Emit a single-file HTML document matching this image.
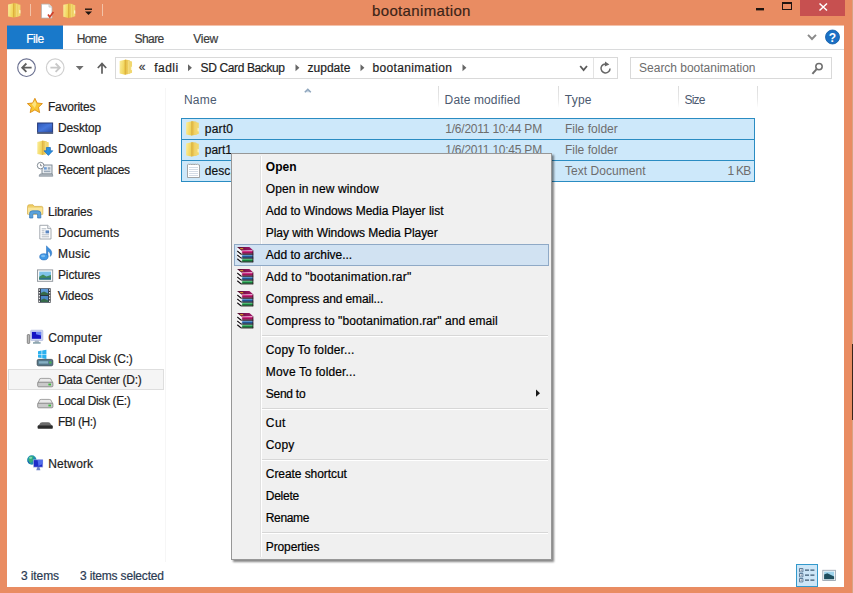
<!DOCTYPE html>
<html>
<head>
<meta charset="utf-8">
<title>bootanimation</title>
<style>
html,body{margin:0;padding:0;}
body{width:853px;height:593px;overflow:hidden;background:#e98c62;font-family:"Liberation Sans",sans-serif;font-size:12px;color:#1a1a1a;position:relative;}
.abs{position:absolute;}
.t{position:absolute;white-space:nowrap;line-height:16px;height:16px;-webkit-text-stroke:0.2px currentColor;}
#title{left:372px;top:1px;font-size:15px;line-height:20px;height:20px;color:#3b2418;letter-spacing:0.35px;}
#client{left:7px;top:26px;width:837px;height:561px;background:#fff;}
#filetab{left:7px;top:26px;width:56px;height:23px;background:#1979ca;}
#ribline{left:7px;top:49px;width:837px;height:1px;background:#dadbdc;}
.box{position:absolute;border:1px solid #d9d9d9;background:#fff;box-sizing:border-box;}
.colsep{position:absolute;top:86px;width:1px;height:22px;background:linear-gradient(#dcdcdc,#e8e8e8 60%,#fff);}
.row{position:absolute;left:181px;width:574px;height:22px;box-sizing:border-box;border:1px solid #2a8cc2;background:#cde8fa;}
#menu{left:231px;top:153px;width:321px;height:407px;background:#f0f0f0;border:1px solid #979797;box-sizing:border-box;box-shadow:2px 2px 2px rgba(0,0,0,0.48);}
#gutter{left:260px;top:156px;width:1px;height:401px;background:#e0e0e0;border-right:1px solid #fff;}
.msep{position:absolute;left:262px;width:286px;height:1px;background:#d7d7d7;border-bottom:1px solid #fff;}
#hl{left:234px;top:244px;width:315px;height:22px;box-sizing:border-box;border:1px solid #8fa9c6;background:#d1e2f2;}
</style>
</head>
<body>
<div id="title" class="t">bootanimation</div>
<div class="abs" style="left:852px;top:0;width:1px;height:593px;background:#d9a382;"></div>
<div class="abs" style="left:852px;top:344px;width:1px;height:76px;background:#3a2418;"></div>
<div class="abs" style="left:800px;top:0;width:44.5px;height:16px;background:#c75050;"></div>
<div id="client" class="abs"></div>
<div class="abs" style="left:7px;top:25px;width:837px;height:1px;background:#f3c2ab;"></div>
<div class="abs" style="left:7px;top:25px;width:56px;height:1px;background:#8b8292;"></div>
<div id="filetab" class="abs"></div>
<div id="ribline" class="abs"></div>
<div class="box" style="left:115px;top:57px;width:503px;height:22px;"></div>
<div class="abs" style="left:593px;top:58px;width:1px;height:20px;background:#e3e3e3;"></div>
<div class="box" style="left:630px;top:57px;width:202px;height:22px;"></div>
<div class="abs" style="left:165px;top:88px;width:1px;height:474px;background:#f6f6f6;"></div>
<div class="abs" style="left:8px;top:369px;width:156px;height:21px;box-sizing:border-box;border:1px solid #dedede;background:#f5f5f5;"></div>
<div class="colsep" style="left:438px;"></div>
<div class="colsep" style="left:558px;"></div>
<div class="colsep" style="left:678px;"></div>
<div class="colsep" style="left:757px;"></div>
<div class="row" style="top:118px;"></div>
<div class="row" style="top:139px;"></div>
<div class="row" style="top:160px;"></div>
<div class="abs" style="left:796px;top:564px;width:22px;height:23px;box-sizing:border-box;border:1px solid #3399cc;background:#cde6f7;"></div>
<div class="t" style="left:26.2px;top:31px;letter-spacing:-0.41px;color:#fff;">File</div>
<div class="t" style="left:76.8px;top:31px;letter-spacing:-0.64px;color:#3c3c3c;">Home</div>
<div class="t" style="left:134.6px;top:31px;letter-spacing:-0.58px;color:#3c3c3c;">Share</div>
<div class="t" style="left:193.3px;top:31px;letter-spacing:-0.30px;color:#3c3c3c;">View</div>
<div class="t" style="left:138.7px;top:59px;letter-spacing:0.60px;color:#3c3c3c;">«</div>
<div class="t" style="left:154.2px;top:60px;letter-spacing:0.47px;color:#1e1e1e;">fadli</div>
<div class="t" style="left:200.6px;top:60px;letter-spacing:-0.38px;color:#1e1e1e;">SD Card Backup</div>
<div class="t" style="left:307.5px;top:60px;letter-spacing:0.02px;color:#1e1e1e;">zupdate</div>
<div class="t" style="left:372.6px;top:60px;letter-spacing:0.33px;color:#1e1e1e;">bootanimation</div>
<div class="t" style="left:639.1px;top:60px;letter-spacing:-0.02px;color:#6d6d6d;-webkit-text-stroke:0;">Search bootanimation</div>
<div class="t" style="left:47.9px;top:99px;letter-spacing:-0.23px;color:#1e1e1e;">Favorites</div>
<div class="t" style="left:58.0px;top:120px;letter-spacing:-0.14px;color:#1e1e1e;">Desktop</div>
<div class="t" style="left:58.0px;top:141px;letter-spacing:-0.02px;color:#1e1e1e;">Downloads</div>
<div class="t" style="left:58.0px;top:162px;letter-spacing:-0.33px;color:#1e1e1e;">Recent places</div>
<div class="t" style="left:48.0px;top:204px;letter-spacing:-0.20px;color:#1e1e1e;">Libraries</div>
<div class="t" style="left:58.0px;top:225px;letter-spacing:0.07px;color:#1e1e1e;">Documents</div>
<div class="t" style="left:58.0px;top:246px;letter-spacing:0.19px;color:#1e1e1e;">Music</div>
<div class="t" style="left:58.0px;top:267px;letter-spacing:-0.14px;color:#1e1e1e;">Pictures</div>
<div class="t" style="left:57.7px;top:288px;letter-spacing:-0.18px;color:#1e1e1e;">Videos</div>
<div class="t" style="left:48.2px;top:330px;letter-spacing:0.16px;color:#1e1e1e;">Computer</div>
<div class="t" style="left:57.9px;top:351px;letter-spacing:-0.27px;color:#1e1e1e;">Local Disk (C:)</div>
<div class="t" style="left:57.9px;top:372px;letter-spacing:-0.28px;color:#1e1e1e;">Data Center (D:)</div>
<div class="t" style="left:57.9px;top:393px;letter-spacing:-0.37px;color:#1e1e1e;">Local Disk (E:)</div>
<div class="t" style="left:57.9px;top:414px;letter-spacing:-0.47px;color:#1e1e1e;">FBI (H:)</div>
<div class="t" style="left:48.2px;top:456px;letter-spacing:0.15px;color:#1e1e1e;">Network</div>
<div class="t" style="left:183.9px;top:92px;letter-spacing:0.26px;color:#4c5a70;-webkit-text-stroke:0;">Name</div>
<div class="t" style="left:444.6px;top:92px;letter-spacing:0.13px;color:#4c5a70;-webkit-text-stroke:0;">Date modified</div>
<div class="t" style="left:564.8px;top:92px;letter-spacing:0.23px;color:#4c5a70;-webkit-text-stroke:0;">Type</div>
<div class="t" style="left:684.5px;top:92px;letter-spacing:-0.80px;color:#4c5a70;-webkit-text-stroke:0;">Size</div>
<div class="t" style="left:204.8px;top:121px;letter-spacing:0.21px;color:#111;">part0</div>
<div class="t" style="left:204.8px;top:142px;letter-spacing:-0.04px;color:#111;">part1</div>
<div class="t" style="left:204.8px;top:163px;letter-spacing:0.05px;color:#111;">desc.txt</div>
<div class="t" style="left:445.3px;top:121px;letter-spacing:-0.23px;color:#6d6d6d;-webkit-text-stroke:0;">1/6/2011 10:44 PM</div>
<div class="t" style="left:445.3px;top:142px;letter-spacing:-0.23px;color:#6d6d6d;-webkit-text-stroke:0;">1/6/2011 10:45 PM</div>
<div class="t" style="left:445.3px;top:163px;letter-spacing:-0.23px;color:#6d6d6d;-webkit-text-stroke:0;">1/6/2011 10:45 PM</div>
<div class="t" style="left:564.9px;top:121px;letter-spacing:0.02px;color:#6d6d6d;-webkit-text-stroke:0;">File folder</div>
<div class="t" style="left:564.9px;top:142px;letter-spacing:0.02px;color:#6d6d6d;-webkit-text-stroke:0;">File folder</div>
<div class="t" style="left:564.9px;top:163px;letter-spacing:0.06px;color:#6d6d6d;-webkit-text-stroke:0;">Text Document</div>
<div class="t" style="left:727.6px;top:163px;letter-spacing:-0.80px;color:#6d6d6d;-webkit-text-stroke:0;">1 KB</div>
<div class="t" style="left:20.9px;top:568px;letter-spacing:-0.08px;color:#2a3a52;">3 items</div>
<div class="t" style="left:80.0px;top:568px;letter-spacing:-0.18px;color:#2a3a52;">3 items selected</div>
<div id="menu" class="abs"></div>
<div id="gutter" class="abs"></div>
<div id="hl" class="abs"></div>
<div class="msep" style="top:335px;"></div>
<div class="msep" style="top:408px;"></div>
<div class="msep" style="top:459px;"></div>
<div class="msep" style="top:532px;"></div>
<div class="t" style="left:265.8px;top:159px;letter-spacing:0.08px;color:#000;font-weight:bold;-webkit-text-stroke:0;">Open</div>
<div class="t" style="left:265.8px;top:181px;letter-spacing:0.12px;color:#000;">Open in new window</div>
<div class="t" style="left:265.8px;top:203px;letter-spacing:-0.01px;color:#000;">Add to Windows Media Player list</div>
<div class="t" style="left:265.8px;top:225px;letter-spacing:-0.05px;color:#000;">Play with Windows Media Player</div>
<div class="t" style="left:265.8px;top:247px;letter-spacing:-0.02px;color:#000;">Add to archive...</div>
<div class="t" style="left:265.8px;top:269px;letter-spacing:0.22px;color:#000;">Add to &quot;bootanimation.rar&quot;</div>
<div class="t" style="left:265.8px;top:291px;letter-spacing:-0.13px;color:#000;">Compress and email...</div>
<div class="t" style="left:265.8px;top:313px;letter-spacing:0.08px;color:#000;">Compress to &quot;bootanimation.rar&quot; and email</div>
<div class="t" style="left:265.8px;top:342px;letter-spacing:0.12px;color:#000;">Copy To folder...</div>
<div class="t" style="left:265.8px;top:364px;letter-spacing:0.14px;color:#000;">Move To folder...</div>
<div class="t" style="left:265.8px;top:386px;letter-spacing:-0.26px;color:#000;">Send to</div>
<div class="t" style="left:265.8px;top:415px;letter-spacing:0.46px;color:#000;">Cut</div>
<div class="t" style="left:265.8px;top:437px;letter-spacing:0.16px;color:#000;">Copy</div>
<div class="t" style="left:265.8px;top:466px;letter-spacing:-0.07px;color:#000;">Create shortcut</div>
<div class="t" style="left:265.8px;top:488px;letter-spacing:-0.26px;color:#000;">Delete</div>
<div class="t" style="left:265.8px;top:510px;letter-spacing:-0.37px;color:#000;">Rename</div>
<div class="t" style="left:265.8px;top:539px;letter-spacing:-0.12px;color:#000;">Properties</div>
<!-- ICONS -->
<svg class="abs" style="left:0;top:0;pointer-events:none" width="853" height="593" viewBox="0 0 853 593">
<defs>
  <linearGradient id="fFront" x1="0" y1="0" x2="1" y2="0.3"><stop offset="0" stop-color="#fbee9c"/><stop offset="1" stop-color="#f0d255"/></linearGradient>
  <linearGradient id="fBack" x1="0" y1="0" x2="1" y2="0"><stop offset="0" stop-color="#e2b840"/><stop offset="0.5" stop-color="#ecca58"/><stop offset="1" stop-color="#e6c04c"/></linearGradient>
  <linearGradient id="rarTop" x1="0" y1="0" x2="1" y2="0"><stop offset="0" stop-color="#4a0c28"/><stop offset="0.6" stop-color="#8a1458"/><stop offset="1" stop-color="#a01868"/></linearGradient>
  <linearGradient id="rarA" x1="0" y1="0" x2="0" y2="1"><stop offset="0" stop-color="#ff9ad2"/><stop offset="0.35" stop-color="#c61a76"/><stop offset="1" stop-color="#6a0a38"/></linearGradient>
  <linearGradient id="rarB" x1="0" y1="0" x2="0" y2="1"><stop offset="0" stop-color="#b8def8"/><stop offset="0.4" stop-color="#2a6cb4"/><stop offset="1" stop-color="#103c74"/></linearGradient>
  <linearGradient id="rarC" x1="0" y1="0" x2="0" y2="1"><stop offset="0" stop-color="#a4eab4"/><stop offset="0.4" stop-color="#22a050"/><stop offset="1" stop-color="#0a5a22"/></linearGradient>
  <linearGradient id="deskG" x1="0" y1="0" x2="1" y2="1"><stop offset="0" stop-color="#2f58b8"/><stop offset="0.5" stop-color="#4677dc"/><stop offset="1" stop-color="#2a4ea8"/></linearGradient>
  <g id="folder">
    <path d="M5.6 0.3 L10.4 0.9 L10.4 13.9 L5.6 14.8Z" fill="url(#fBack)"/>
    <path d="M10 1.4 L12.8 2 L12.8 13 L10 13.9Z" fill="#f1d76e"/>
    <path d="M11.6 7 L12.8 7.4 L12.8 10.6 L11.6 10.4Z" fill="#fff8d8" opacity="0.9"/>
    <path d="M0.1 1.6 L5.7 0.5 L5.7 14.8 L0.1 13.6Z" fill="url(#fFront)"/>
    <path d="M5.3 0.6 L6.1 0.5 L6.1 14.8 L5.3 14.7Z" fill="#d6a634" opacity="0.85"/>
    <path d="M8.6 1 L9.6 1.1 L9.6 14 L8.6 14.2Z" fill="#f7e48e" opacity="0.8"/>
  </g>
  <g id="rar">
    <path d="M0.2 1 L4.8 4.2 L4.8 15 L3.8 15.2 L0.2 12.2Z" fill="#fbfbfb"/>
    <path d="M0.3 4.4 L3.9 7.4 M0.3 8.4 L3.9 11.3 M0.3 12.1 L3.9 15.2" stroke="#151015" stroke-width="1.15" fill="none"/>
    <path d="M0 0.5 L12.4 0.3 L16.1 3.7 L4.6 4.1Z" fill="url(#rarTop)"/>
    <path d="M2.6 1.4 L5.6 1.3 L6.8 2.6 L3.9 2.7Z" fill="#d8922e"/>
    <rect x="3.8" y="7" width="12.4" height="1.3" fill="#1c0a14"/>
    <rect x="3.8" y="10.7" width="12.4" height="1.5" fill="#0c1420"/>
    <rect x="3.8" y="14.7" width="12.4" height="1.1" fill="#0a140c"/>
    <rect x="4.8" y="4" width="11.3" height="3.1" fill="url(#rarA)"/>
    <rect x="4.8" y="8.2" width="11.3" height="2.6" fill="url(#rarB)"/>
    <rect x="4.8" y="12.2" width="11.3" height="2.6" fill="url(#rarC)"/>
    <rect x="4.6" y="4" width="0.6" height="11" fill="#fff" opacity="0.7"/>
    <rect x="15.6" y="3.6" width="0.7" height="12" fill="#2a0a1a"/>
  </g>
  <g id="hdd">
    <path d="M2 2.5 Q2 0.8 4 0.8 L12 0.8 Q14 0.8 14.2 2.5 L15.6 5 L0.6 5Z" fill="#e9e9e9" stroke="#8d8d8d" stroke-width="0.8"/>
    <rect x="0.5" y="4.6" width="15.2" height="4.6" rx="1" fill="#c9c9c9" stroke="#7d7d7d" stroke-width="0.8"/>
    <rect x="11.2" y="6" width="2.6" height="1.8" fill="#3db83d"/>
  </g>
</defs>


<!-- window buttons -->
<path d="M819.5 3.5l7.5 7M827 3.5l-7.5 7" stroke="#fff" stroke-width="1.5" fill="none"/>
<rect x="756" y="8" width="8" height="2.4" fill="#1e1410"/>
<rect x="782.5" y="3" width="9" height="6.5" fill="none" stroke="#1e1410" stroke-width="1"/>
<rect x="782" y="2" width="10" height="2" fill="#1e1410"/>
<!-- title bar quick access -->
<g transform="translate(8,2.8) scale(0.97,1.0)"><use href="#folder"/></g>
<rect x="30" y="4" width="1" height="12" fill="#f3c3a8"/>
<g transform="translate(41,3.6)">
  <path d="M0.5 0.5 L8 0.5 L11 3.5 L11 14.5 L0.5 14.5Z" fill="#fff" stroke="#b9b2ac" stroke-width="0.8"/>
  <path d="M8 0.5 L8 3.5 L11 3.5" fill="#e8e8e8" stroke="#b9b2ac" stroke-width="0.6"/>
  <path d="M7 11 L8.8 13.4 L12.4 8.4" stroke="#d0402a" stroke-width="1.7" fill="none"/>
</g>
<g transform="translate(63.2,3.2) scale(0.94,1.0)"><use href="#folder"/></g>
<rect x="85" y="8.5" width="7" height="1.4" fill="#1e1410"/>
<path d="M85 11.5 L92 11.5 L88.5 15Z" fill="#1e1410"/>
<rect x="102" y="4" width="1" height="12" fill="#f3c3a8"/>

<!-- ribbon right -->
<path d="M808 34.8 L812 39 L816 34.8" stroke="#8a8a8a" stroke-width="1.9" fill="none"/>
<circle cx="832.5" cy="37" r="7" fill="#1a6fc4"/>
<circle cx="832.5" cy="37" r="7" fill="none" stroke="#0f5aa6" stroke-width="0.8"/>
<text x="832.5" y="41.5" font-family="Liberation Sans, sans-serif" font-size="12" font-weight="bold" fill="#fff" text-anchor="middle">?</text>

<!-- nav buttons -->
<circle cx="26.5" cy="67.7" r="8.8" fill="#fff" stroke="#6a7090" stroke-width="1.15"/>
<path d="M31.6 67.7 L22.6 67.7 M26.4 63.5 L22.2 67.7 L26.4 71.9" stroke="#5f5f5f" stroke-width="1.8" fill="none"/>
<circle cx="55.2" cy="67.7" r="8.8" fill="#fff" stroke="#d0d0d0" stroke-width="1.2"/>
<path d="M50.4 67.7 L59.4 67.7 M55.6 63.5 L59.8 67.7 L55.6 71.9" stroke="#c8c8c8" stroke-width="1.8" fill="none"/>
<path d="M75.8 66 L83.6 66 L79.7 70.2Z" fill="#6e6e6e"/>
<path d="M102 73.8 L102 63.8 M97.8 68 L102 63.6 L106.2 68" stroke="#5e5e5e" stroke-width="1.7" fill="none"/>

<!-- address bar bits -->
<g transform="translate(119.5,59.3) scale(0.98,1.04)"><use href="#folder"/></g>
<path d="M188 64.3 L191.9 67.8 L188 71.3Z" fill="#666"/>
<path d="M295.5 64.3 L299.4 67.8 L295.5 71.3Z" fill="#666"/>
<path d="M360.5 64.3 L364.4 67.8 L360.5 71.3Z" fill="#666"/>
<path d="M462.5 64.3 L466.4 67.8 L462.5 71.3Z" fill="#666"/>
<path d="M580.2 66 L583.6 70 L587 66" stroke="#5a5a5a" stroke-width="1.8" fill="none"/>
<path d="M610 68.4 A4.5 4.5 0 1 1 607 64.2" stroke="#666" stroke-width="1.5" fill="none"/>
<path d="M605 61.4 L609.4 64.4 L604.8 66.6Z" fill="#666"/>
<circle cx="819" cy="66.6" r="3.2" fill="none" stroke="#6e6e6e" stroke-width="1.5"/>
<path d="M816.6 69.2 L812.4 73.8" stroke="#6e6e6e" stroke-width="2" fill="none"/>

<!-- sort arrow -->
<path d="M304.8 92.2 L307.8 89.2 L310.8 92.2" stroke="#8fa6bd" stroke-width="1.5" fill="#c8d6e4"/>

<!-- file list icons -->
<g transform="translate(186,120.8)"><use href="#folder"/></g>
<g transform="translate(186,141.8)"><use href="#folder"/></g>
<g transform="translate(187,163)">
  <path d="M0.5 2 L1.6 0.8 L2.7 2 L3.8 0.8 L4.9 2 L6 0.8 L7.1 2 L8.2 0.8 L9.3 2 L10.4 0.8 L11.5 2 L12.5 2 L12.5 14.5 L0.5 14.5Z" fill="#fff" stroke="#8f8f8f" stroke-width="0.8"/>
  <path d="M2 4.5H11M2 6.5H11M2 8.5H11M2 10.5H11M2 12.5H11" stroke="#c9d3e0" stroke-width="0.8"/>
</g>

<!-- sidebar icons -->
<!-- star -->
<path d="M34.9 98.3 L37.1 103 L42.4 103.6 L38.5 107.2 L39.6 112.6 L34.9 109.9 L30.2 112.6 L31.3 107.2 L27.4 103.6 L32.7 103Z" fill="#f9c632" stroke="#dc8c14" stroke-width="0.9"/>
<path d="M34.9 100.6 L36.4 104 L34.9 108 L31.8 104.4Z" fill="#fde88e" opacity="0.85"/>
<!-- desktop -->
<rect x="37.6" y="123" width="15" height="9.4" fill="url(#deskG)" stroke="#263a78" stroke-width="1"/>
<rect x="37.1" y="132.4" width="16" height="1.6" fill="#5b6884"/>
<!-- downloads -->
<g transform="translate(37.2,140.3) scale(0.9,1.0)"><use href="#folder"/></g>
<path d="M46.4 147.5 L50.4 147.5 L50.4 150.8 L52.8 150.8 L48.4 155.4 L44 150.8 L46.4 150.8Z" fill="#2a8fe0" stroke="#1768b8" stroke-width="0.7"/>
<!-- recent places -->
<g transform="translate(37,162)">
  <rect x="5" y="3" width="10" height="9" fill="#e9edf1" stroke="#77838f" stroke-width="0.9"/>
  <rect x="7" y="5.2" width="2.8" height="2.4" fill="#6f9fd8"/><rect x="10.8" y="5.2" width="2.6" height="2.4" fill="#9aa9b8"/><rect x="7" y="8.6" width="6.4" height="1.6" fill="#9aa9b8"/>
  <circle cx="3.6" cy="3.6" r="3.3" fill="#fff" stroke="#76808a" stroke-width="0.9"/>
  <path d="M3.6 1.8 L3.6 3.8 L5.2 3.8" stroke="#6a7178" stroke-width="0.8" fill="none"/>
  <path d="M3 12 L15.4 12 L15.8 14.2 L2 14.2Z" fill="#b4bcc4" stroke="#808a94" stroke-width="0.7"/>
</g>
<!-- libraries -->
<g transform="translate(27,204.2)">
  <path d="M0.6 2.2 Q0.6 0.6 2.2 0.6 L6 0.6 L7.4 2.2 L14.6 2.2 Q15.8 2.2 15.8 3.6 L15.8 10 L0.6 10Z" fill="#f0cf68" stroke="#d3a93c" stroke-width="0.7"/>
  <rect x="1" y="3.4" width="14.4" height="6.5" fill="#f9e59a"/>
  <path d="M2.6 13.8 L2.6 9.4 Q2.6 6.6 5.4 6.6 L11 6.6 Q13.8 6.6 13.8 9.4 L13.8 13.8 L10.6 13.8 L10.6 10.6 Q10.6 9.6 9.6 9.6 L6.8 9.6 Q5.8 9.6 5.8 10.6 L5.8 13.8Z" fill="#5aa2dc" stroke="#2f74b8" stroke-width="0.7"/>
</g>
<!-- documents -->
<g transform="translate(39.3,224.8)">
  <path d="M0.5 0.5 L8.4 0.5 L11.7 3.8 L11.7 14.2 L0.5 14.2Z" fill="#fff" stroke="#8d949c" stroke-width="0.8"/>
  <path d="M8.4 0.5 L8.4 3.8 L11.7 3.8" fill="#e9edf1" stroke="#8d949c" stroke-width="0.7"/>
  <path d="M2.4 4H7M2.4 6H5.2M2.4 8H5.2M2.4 10H9.8M2.4 12H9.8" stroke="#9aa4b0" stroke-width="0.8"/>
  <rect x="6.2" y="5.6" width="3.6" height="3" fill="#5a86c0"/>
</g>
<!-- music -->
<g transform="translate(39.3,245.4)">
  <path d="M7.2 0.4 C8.2 2.6 12.8 3.8 12.4 8.2 C12.2 9.6 11.6 10.4 11 11 C11.6 8.4 10.2 6.2 8.6 5.6 L8.6 11.6 L7.2 11.6Z" fill="#3b8edc" stroke="#1f68b8" stroke-width="0.5"/>
  <ellipse cx="4.6" cy="11.4" rx="4.2" ry="3.1" fill="#3f98e6" stroke="#1f68b8" stroke-width="0.6"/>
  <ellipse cx="3.8" cy="10.6" rx="2" ry="1.2" fill="#8cc6f4" opacity="0.8"/>
</g>
<!-- pictures -->
<g transform="translate(37,269.4)">
  <rect x="0.5" y="0.5" width="15.2" height="11.4" fill="#fafafa" stroke="#8b9299" stroke-width="0.9"/>
  <rect x="2.2" y="2.2" width="11.8" height="8" fill="#7fc2e8"/>
  <path d="M2.2 7.4 L6 5.2 L9.4 7.2 L14 5.6 L14 10.2 L2.2 10.2Z" fill="#3f8a5a"/>
  <path d="M2.2 8.8 L14 8 L14 10.2 L2.2 10.2Z" fill="#2d6f8a"/>
</g>
<!-- videos -->
<g transform="translate(38,288)">
  <rect x="0.3" y="0.3" width="12.4" height="14.4" fill="#2a2e36"/>
  <rect x="2.8" y="0.8" width="7.4" height="6.2" fill="#5d9ad8"/>
  <rect x="2.8" y="7.9" width="7.4" height="6.2" fill="#4a86c6"/>
  <path d="M2.8 5 L6 3.4 L10.2 5.4 L10.2 7 L2.8 7Z" fill="#356a4a"/>
  <path d="M2.8 12 L6 10.6 L10.2 12.4 L10.2 14.1 L2.8 14.1Z" fill="#356a4a"/>
  <path d="M0.8 1.2h1.2v1.6h-1.2zM0.8 4h1.2v1.6h-1.2zM0.8 6.8h1.2v1.6h-1.2zM0.8 9.6h1.2v1.6h-1.2zM0.8 12.4h1.2v1.6h-1.2zM11 1.2h1.2v1.6h-1.2zM11 4h1.2v1.6h-1.2zM11 6.8h1.2v1.6h-1.2zM11 9.6h1.2v1.6h-1.2zM11 12.4h1.2v1.6h-1.2z" fill="#e8e8e8"/>
</g>
<!-- computer -->
<g transform="translate(27,330)">
  <rect x="0.3" y="4.6" width="2.4" height="8.8" rx="0.6" fill="#b9b9b9" stroke="#666" stroke-width="0.7"/>
  <rect x="3.7" y="0.2" width="12.2" height="10.4" rx="0.8" fill="#ccd4f2" stroke="#a4aed6" stroke-width="0.6"/>
  <rect x="4.9" y="1.9" width="9.2" height="6.9" fill="#1414c4"/>
  <path d="M9 1.9 L14.1 1.9 L14.1 5.5 L9 4.2Z" fill="#6a86f4"/>
  <path d="M8 10.6 L11.6 10.6 L12.2 12.4 L7.4 12.4Z" fill="#aab6c4"/>
  <rect x="6" y="12.3" width="7.6" height="1.3" fill="#6f8f9a"/>
</g>
<!-- local disk C -->
<path d="M38 351.2 L41.6 350.6 L41.6 354 L38 354Z M42.2 350.5 L46.4 349.8 L46.4 354 L42.2 354Z M38 354.6 L41.6 354.6 L41.6 358 L38 357.6Z M42.2 354.6 L46.4 354.6 L46.4 358.9 L42.2 358.2Z" fill="#2ab0ee"/>
<rect x="37.2" y="359.4" width="15.6" height="6.4" rx="1.4" fill="#55788a" stroke="#33444e" stroke-width="0.8"/>
<rect x="38.8" y="361.2" width="9.4" height="2.4" fill="#86b0c4"/>
<rect x="49.2" y="361.6" width="2.2" height="1.8" fill="#49c049"/>
<!-- D, E -->
<g transform="translate(37.2,377.6)"><use href="#hdd"/></g>
<g transform="translate(37.2,398.6)"><use href="#hdd"/></g>
<!-- H -->
<g transform="translate(37.2,421.6)">
  <path d="M2.4 2.6 Q2.8 0.6 5 0.6 L11 0.6 Q13.2 0.6 13.6 2.6 L15.4 4.4 L0.6 4.4Z" fill="#6b6b6b"/>
  <rect x="0.4" y="4" width="15.2" height="3.2" rx="0.8" fill="#2b2b2b"/>
</g>
<!-- network -->
<g transform="translate(27,455)">
  <circle cx="4.8" cy="5" r="4.7" fill="#1e8fb0"/>
  <path d="M2 2.2 Q4.6 0.4 6.6 1.6 Q5.4 3.6 6.2 5.6 Q4.2 8.6 2.4 8 Q0.6 5 2 2.2Z" fill="#36b07a"/>
  <path d="M0.4 5.4 Q2 6.4 3 8.6 Q1 8 0.4 5.4Z" fill="#1c50b8"/>
  <ellipse cx="3.6" cy="2.8" rx="1.6" ry="1.1" fill="#9fe8d0" opacity="0.7"/>
  <rect x="6.6" y="4.8" width="9.2" height="7.3" fill="#1c2cc8" stroke="#aab4e0" stroke-width="0.6"/>
  <path d="M10.5 4.8 L15.8 4.8 L15.8 9 L11.5 11Z" fill="#5674f0" opacity="0.9"/>
  <path d="M10.4 12.1 L12.4 12.1 L13.4 15.2 L9.2 15.2Z" fill="#6a7ec8"/>
</g>

<!-- status bar view buttons -->
<g transform="translate(799,568)">
  <path d="M0.5 0.5h3.4v3.4h-3.4zM0.5 5.5h3.4v3.4h-3.4zM0.5 10.5h3.4v3.4h-3.4z" fill="#fff" stroke="#4d6f8f" stroke-width="0.9"/>
  <path d="M1.6 1.6h1.2v1.2h-1.2zM1.6 6.6h1.2v1.2h-1.2zM1.6 11.6h1.2v1.2h-1.2z" fill="#4d6f8f"/>
  <path d="M6 2.2H10M11.4 2.2H15.4M6 7.2H10M11.4 7.2H15.4M6 12.2H10M11.4 12.2H15.4" stroke="#3d5872" stroke-width="1.3"/>
</g>
<g transform="translate(822.3,569.8)">
  <rect x="0.5" y="0.5" width="12.6" height="10.2" fill="#fafbfc" stroke="#9aa6b2" stroke-width="0.9"/>
  <rect x="1.8" y="1.8" width="10" height="7.6" fill="#9fd4ec"/>
  <path d="M1.8 4.6 L5 3.4 L11.8 6.6 L11.8 9.4 L1.8 9.4Z" fill="#1f4f5f"/>
</g>

<!-- context menu icons -->
<g transform="translate(237,246.6)"><use href="#rar"/></g>
<g transform="translate(237,268.6)"><use href="#rar"/></g>
<g transform="translate(237,290.6)"><use href="#rar"/></g>
<g transform="translate(237,312.6)"><use href="#rar"/></g>
<path d="M536 389.6 L540 393.2 L536 396.8Z" fill="#1a1a1a"/>
</svg>
</body>
</html>
